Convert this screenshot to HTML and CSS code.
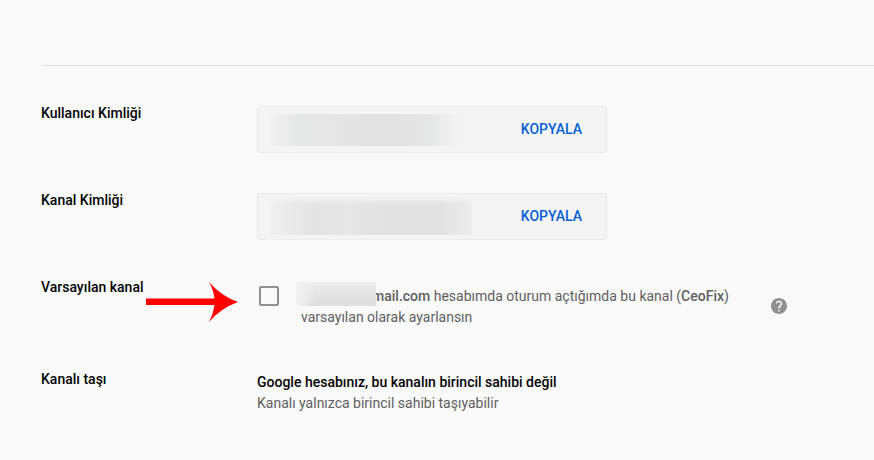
FILE: index.html
```html
<!DOCTYPE html>
<html lang="tr">
<head>
<meta charset="utf-8">
<meta name="viewport" content="width=device-width, initial-scale=1">
<title>Gelişmiş ayarlar</title>
<link rel="stylesheet" href="styles.css">
</head>
<body>
<main class="settings">
  <section class="row">
    <h2 class="row-title">Kullanıcı Kimliği</h2>
    <div class="id-box">
      <span class="redacted redacted-user"></span>
      <button class="copy" type="button">KOPYALA</button>
    </div>
  </section>
  <section class="row">
    <h2 class="row-title">Kanal Kimliği</h2>
    <div class="id-box">
      <span class="redacted redacted-channel"></span>
      <button class="copy" type="button">KOPYALA</button>
    </div>
  </section>
  <section class="row">
    <h2 class="row-title">Varsayılan kanal</h2>
    <svg class="arrow" viewBox="0 0 92 40" aria-hidden="true">
      <path fill="#fe0000" d="M0 16.5H68.500Q67.500 8 63 0Q75 14 92 20Q75 26 63 40Q67.500 31.500 68.500 23H0Z"/>
    </svg>
    <div class="default-channel">
      <input class="check" type="checkbox" id="default-channel">
      <label class="check-label" for="default-channel"><span class="account"><span class="account-mask"></span></span><b>mail.com</b> hesabımda oturum açtığımda bu kanal (<b>CeoFix</b>) varsayılan olarak ayarlansın</label>
      <button class="help" type="button" aria-label="Yardım">
        <svg viewBox="2 2 20 20" aria-hidden="true"><path fill="#909090" d="M12 2C6.480 2 2 6.480 2 12s4.480 10 10 10 10-4.480 10-10S17.520 2 12 2zm1 17h-2v-2h2v2zm2.070-7.750l-.9.920C13.450 12.900 13 13.500 13 15h-2v-.5c0-1.100.45-2.100 1.170-2.830l1.240-1.260c.37-.36.59-.86.59-1.410 0-1.100-.9-2-2-2s-2 .9-2 2H8c0-2.210 1.790-4 4-4s4 1.790 4 4c0 .88-.36 1.680-.93 2.250z"/></svg>
      </button>
    </div>
  </section>
  <section class="row">
    <h2 class="row-title">Kanalı taşı</h2>
    <div class="move">
      <p class="move-title">Google hesabınız, bu kanalın birincil sahibi değil</p>
      <p class="move-note">Kanalı yalnızca birincil sahibi taşıyabilir</p>
    </div>
  </section>
</main>
</body>
</html>
```
FILE: styles.css
```css
* {
  box-sizing: border-box;
}

body {
  margin: 0;
  background: #f9f9f9;
  color: #030303;
  font: 400 14px/21px Roboto, sans-serif;
}

h2,
p {
  margin: 0;
}

button {
  padding: 0;
  border: 0;
  background: none;
  font: inherit;
  cursor: pointer;
}

.settings {
  display: flex;
  flex-direction: column;
  gap: 40px;
  margin: 65px 0 0 41px;
  padding: 40px 0;
  border-top: 1px solid #dedede;
}

.row {
  position: relative;
  display: grid;
  grid-template-columns: 216px minmax(0, 1fr);
  align-items: start;
}

.row-title {
  font-size: 14px;
  font-weight: 500;
  line-height: 14px;
}

.id-box {
  display: flex;
  align-items: center;
  justify-content: space-between;
  max-width: 350px;
  height: 47px;
  padding: 0 24px 0 11px;
  border: 1px solid #ebebeb;
  border-radius: 2px;
  background: #f4f4f4;
}

.redacted-user {
  width: 192px;
  height: 32px;
  background: linear-gradient(90deg, #f1f1f1, #e5e7e6 16%, #e6e6e6 34%, #e2e2e2 50%, #e3e3e3 75%, #e5e7e6 84%, #f4f4f4);
}

.redacted-channel {
  width: 202px;
  height: 38px;
  margin: 0 0 2px 1px;
  background:
    linear-gradient(#f4f4f4, #f4f4f400 20%),
    linear-gradient(90deg, #f0f0f0, #e4e4e4 20%, #e6e6e6 40%, #e2e2e2 55%, #e2e2e2 85%, #ededed);
}

.copy {
  color: #065fd4;
  font-weight: 500;
}

.arrow {
  position: absolute;
  top: 2px;
  left: 105px;
  width: 92px;
  height: 40px;
}

.default-channel {
  display: flex;
  align-items: center;
  max-width: 530px;
  min-height: 52px;
  padding-left: 2px;
}

.check {
  appearance: none;
  flex: none;
  align-self: flex-start;
  width: 20px;
  height: 20px;
  margin: 6px 22px 0 0;
  border: 2px solid #909090;
  border-radius: 2px;
}

.check-label {
  flex: 0 1 450px;
  margin-top: 2px;
  color: #606060;
}

.check-label b {
  font-weight: 500;
}

.account {
  position: relative;
  display: inline-block;
  width: 71px;
  height: 14px;
}

.account-mask {
  position: absolute;
  bottom: -5px;
  left: -5px;
  width: 80px;
  height: 24px;
  background:
    linear-gradient(90deg, #f3f3f3, #f3f3f300 25%),
    linear-gradient(#ececec, #e4e4e4 50%, #dedede);
}

.help {
  flex: none;
  width: 16px;
  height: 16px;
  margin-left: auto;
}

.help svg {
  display: block;
}

.move-title {
  font-weight: 500;
}

.move-note {
  color: #606060;
}
```
